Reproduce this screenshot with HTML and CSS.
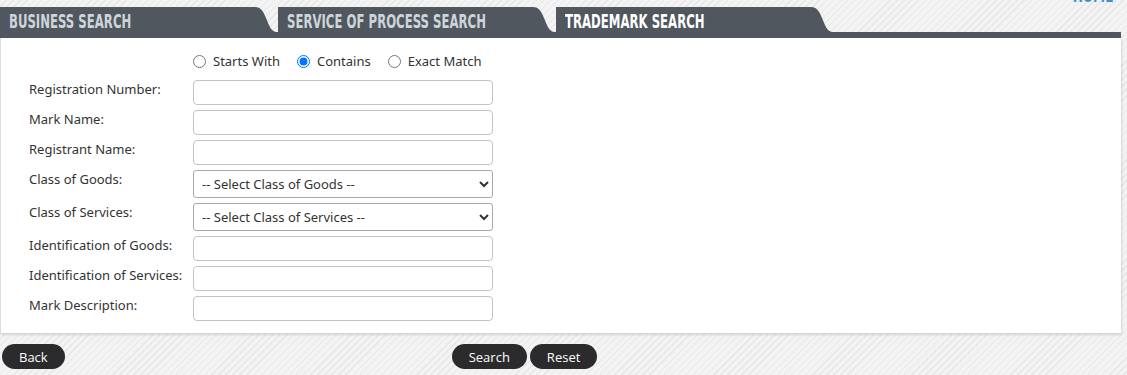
FILE: index.html
```html
<!DOCTYPE html>
<html lang="en">
<head>
    <meta charset="UTF-8">
    <title>Trademark Search</title>
    <link rel="stylesheet" href="styles.css">
</head>
<body>
    <div class="page">
        <div class="top">
            <a class="home" href="#">HOME</a>
        </div>

        <div class="tabs">
            <div class="tab">
                <div class="tab-label"><span>BUSINESS SEARCH</span></div>
                <svg class="tab-end" width="24" height="25" viewBox="0 0 24 25"><path d="M0 0 H2 C8 0 10 4 13 11 C16 18 18 25 24 25 H0 Z" fill="#50575e"/></svg>
            </div>
            <div class="tab">
                <div class="tab-label"><span>SERVICE OF PROCESS SEARCH</span></div>
                <svg class="tab-end" width="24" height="25" viewBox="0 0 24 25"><path d="M0 0 H2 C8 0 10 4 13 11 C16 18 18 25 24 25 H0 Z" fill="#50575e"/></svg>
            </div>
            <div class="tab active">
                <div class="tab-label"><span>TRADEMARK SEARCH</span></div>
                <svg class="tab-end" width="24" height="25" viewBox="0 0 24 25"><path d="M0 0 H2 C8 0 10 4 13 11 C16 18 18 25 24 25 H0 Z" fill="#50575e"/></svg>
            </div>
        </div>
        <div class="tab-strip"></div>

        <div class="panel">
            <div class="form">
                <div class="label"></div>
                <div class="radios">
                    <label><input type="radio" name="match"> Starts With</label>
                    <label><input type="radio" name="match" checked> Contains</label>
                    <label><input type="radio" name="match"> Exact Match</label>
                </div>

                <label class="label" for="regnum">Registration Number:</label>
                <input type="text" id="regnum">

                <label class="label" for="markname">Mark Name:</label>
                <input type="text" id="markname">

                <label class="label" for="registrant">Registrant Name:</label>
                <input type="text" id="registrant">

                <label class="label" for="goods">Class of Goods:</label>
                <select id="goods">
                    <option>-- Select Class of Goods --</option>
                </select>

                <label class="label" for="services">Class of Services:</label>
                <select id="services">
                    <option>-- Select Class of Services --</option>
                </select>

                <label class="label" for="idgoods">Identification of Goods:</label>
                <input type="text" id="idgoods">

                <label class="label" for="idservices">Identification of Services:</label>
                <input type="text" id="idservices">

                <label class="label" for="desc">Mark Description:</label>
                <input type="text" id="desc">
            </div>
        </div>

        <div class="actions">
            <button class="btn">Back</button>
            <div class="actions-main">
                <button class="btn">Search</button>
                <button class="btn">Reset</button>
            </div>
        </div>
    </div>
</body>
</html>
```

FILE: styles.css
```css
body {
    margin: 0;
    background-color: #f2f2f2;
    background-image: repeating-linear-gradient(-45deg, #f3f3f3 0, #f3f3f3 2px, #e6e6e6 2px, #e6e6e6 3px, #f3f3f3 3px, #f3f3f3 5px);
    font-family: "Noto Sans", "Open Sans", sans-serif;
    font-size: 13px;
    color: #333;
    height: 375px;
    overflow: hidden;
}
.page {
    width: 1121px;
}
.top {
    height: 7px;
    display: flex;
    justify-content: flex-end;
    overflow: hidden;
}
.home {
    margin-top: -14px;
    margin-right: 7px;
    color: #3d8fd6;
    text-decoration: none;
    font-family: "DejaVu Sans Condensed", sans-serif;
    font-weight: bold;
    font-size: 18px;
    line-height: 20px;
    display: inline-block;
    transform: scaleX(0.75);
    transform-origin: right;
}
.tabs {
    display: flex;
    height: 25px;
    gap: 1px;
}
.tab {
    display: flex;
    align-items: stretch;
}
.tab-label {
    width: 244px;
    padding-left: 9px;
    background-color: #50575e;
    color: #cdd4da;
    font-family: "DejaVu Sans Condensed", sans-serif;
    font-weight: bold;
    font-size: 19px;
    line-height: 28px;
    white-space: nowrap;
}
.tab-label span {
    display: inline-block;
    transform: scaleX(0.685);
    transform-origin: left;
}
.tab.active .tab-label {
    color: #fff;
}
.tab-end {
    display: block;
}
.tab-strip {
    height: 6px;
    background-color: #50575e;
}
.panel {
    background-color: #fff;
    border-left: 1px solid #ddd;
    border-bottom: 1px solid #d8d8d8;
    box-shadow: 1px 1px 2px rgba(0, 0, 0, 0.12);
    padding: 13px 0 12px 28px;
}
.form {
    display: grid;
    grid-template-columns: 164px 300px;
    row-gap: 5px;
    align-items: start;
}
.label {
    line-height: 18px;
}
.radios {
    display: flex;
    gap: 17px;
    height: 20px;
    align-items: center;
    margin-bottom: 4px;
}
.radios label {
    display: flex;
    align-items: center;
    gap: 5px;
}
.radios input {
    margin: 0 2px 0 0;
    width: 13px;
    height: 13px;
}
input[type="text"] {
    box-sizing: border-box;
    width: 300px;
    height: 25px;
    margin: 0;
    border: 1px solid #c4c4c4;
    border-radius: 4px;
    font-family: inherit;
    font-size: 13px;
}
select {
    box-sizing: border-box;
    width: 300px;
    height: 28px;
    margin: 0;
    padding: 0 4px;
    border: 1px solid #a9a9a9;
    border-radius: 3px;
    background-color: #fff;
    color: #333;
    font-family: inherit;
    font-size: 13px;
}
.actions {
    display: flex;
    align-items: center;
    padding: 10px 0 0 2px;
}
.actions-main {
    display: flex;
    gap: 3px;
    margin-left: 387px;
}
.btn {
    height: 25px;
    padding: 0 17px;
    border: none;
    border-radius: 13px;
    background-color: #2b2b2d;
    color: #fff;
    font-family: "Open Sans", "Noto Sans", sans-serif;
    font-size: 13px;
    cursor: pointer;
}
```
